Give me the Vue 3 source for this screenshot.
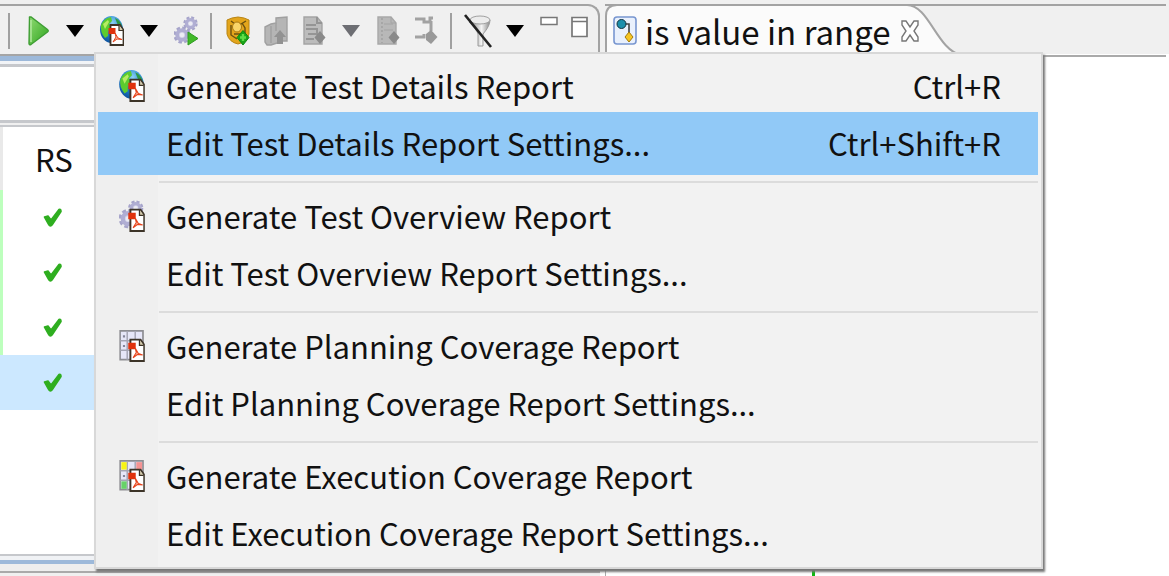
<script setup>
const tools = [
  { id: 'play', label: 'Run' },
  { id: 'caret', label: 'Run options' },
  { id: 'globe', label: 'Generate report' },
  { id: 'caret', label: 'Report options' },
  { id: 'gears', label: 'Execute all' },
  { id: 'sep' },
  { id: 'shield', label: 'Add test' },
  { id: 'import', label: 'Import', off: true },
  { id: 'page', label: 'New page', off: true },
  { id: 'caret', label: 'Page options', off: true },
  { id: 'sheet', label: 'New sheet', off: true },
  { id: 'link', label: 'Link', off: true },
  { id: 'sep' },
  { id: 'filter', label: 'Filter' },
  { id: 'caret', label: 'Filter options' },
  { id: 'min', label: 'Minimize' },
  { id: 'max', label: 'Maximize' },
]
const groups = [
  [
    { text: 'Generate Test Details Report', keys: 'Ctrl+R', icon: 'globe' },
    { text: 'Edit Test Details Report Settings...', keys: 'Ctrl+Shift+R', active: true },
  ],
  [
    { text: 'Generate Test Overview Report', icon: 'overview' },
    { text: 'Edit Test Overview Report Settings...' },
  ],
  [
    { text: 'Generate Planning Coverage Report', icon: 'planning' },
    { text: 'Edit Planning Coverage Report Settings...' },
  ],
  [
    { text: 'Generate Execution Coverage Report', icon: 'execution' },
    { text: 'Edit Execution Coverage Report Settings...' },
  ],
]
const rows = [1, 2, 3, 4]
</script>

<template>
  <svg class="defs" aria-hidden="true">
    <defs>
      <linearGradient id="gPlay" x1="0" y1="0" x2="1" y2="1">
        <stop offset="0" stop-color="#8fda72" /><stop offset="1" stop-color="#2fa51e" />
      </linearGradient>
      <radialGradient id="gSea" cx=".55" cy=".25" r=".8">
        <stop offset="0" stop-color="#8cd0f5" /><stop offset=".5" stop-color="#2384cf" /><stop offset="1" stop-color="#0b4d9a" />
      </radialGradient>
      <linearGradient id="gFun" x1="0" x2="1">
        <stop offset="0" stop-color="#777" /><stop offset=".6" stop-color="#f4f4f4" /><stop offset="1" stop-color="#888" />
      </linearGradient>
      <symbol id="s-pdf" viewBox="0 0 24 30">
        <path d="M10.500 9h9.500l3.500 5v15h-13z" fill="#fff" stroke="#3d3428" stroke-width="1.800" />
        <path d="M19 9v5.500h4" fill="#d8cfae" stroke="#3d3428" stroke-width="1.200" />
        <path d="M8.500 12h7v6h-7z" fill="#e0320c" />
        <path d="M13 26l3-5-1-4 3 5 4 1.500-5-.5z" fill="#f6b49c" stroke="#e5441c" />
      </symbol>
      <symbol id="s-gear" viewBox="0 0 24 24">
        <circle cx="12" cy="12" r="9.500" fill="none" stroke="#a6a4ca" stroke-width="4" stroke-dasharray="4.500 2.960" />
        <circle cx="12" cy="12" r="6.500" fill="#d3d3e8" stroke="#b0aed3" stroke-width="5" />
        <circle cx="12" cy="12" r="3" fill="#ececf4" />
      </symbol>
      <symbol id="i-play" viewBox="0 0 24 30">
        <path d="M3.500 1.500Q3 .5 5 1L21.500 13.500q1.500 1.300 0 2.500L5 28.500q-2 .8-2-1z" fill="url(#gPlay)" stroke="#3f9e34" stroke-width="1.400" />
        <path d="M5 4v22" stroke="#b5eaa2" stroke-width="1.400" />
      </symbol>
      <symbol id="i-caret" viewBox="0 0 24 30"><path d="M3 9h18l-9 12z" fill="currentColor" /></symbol>
      <symbol id="i-globe" viewBox="0 0 24 30">
        <ellipse cx="11.500" cy="13.500" rx="11.500" ry="13.500" fill="url(#gSea)" />
        <path d="M1 9Q4 2 11 1l1 4-3 3 3 4-4 3v5l-3 2q-5-6-4-13z" fill="#5ccb2f" />
        <path d="M3 8l5-4 1 2-4 7z" fill="#b7ec63" />
        <path d="M15 2q5 2 7 8l-3 1-2-4z" fill="#2e9a45" />
        <use href="#s-pdf" width="24" height="30" />
      </symbol>
      <symbol id="i-gears" viewBox="0 0 24 30">
        <use href="#s-gear" x="9" y="0" width="15" height="15" />
        <use href="#s-gear" x="-1" y="10" width="18" height="18" />
        <path d="M14 16l10 6.500L14 29z" fill="#41b928" stroke="#2e9a20" />
      </symbol>
      <symbol id="i-overview" viewBox="0 0 24 30">
        <use href="#s-gear" x="8" y="0" width="15" height="15" />
        <use href="#s-gear" x="-1" y="8" width="19" height="19" />
        <use href="#s-pdf" width="24" height="30" />
      </symbol>
      <symbol id="s-grid" viewBox="0 0 24 30">
        <path d="M.8.800h21.500v27H.8z" fill="#e6e6f8" stroke="#8d8d92" stroke-width="1.600" />
        <path d="M7.500 1v27M15 1v27M1 10h21M1 19h21" stroke="#a5a5b4" stroke-width="1.400" />
        <path d="M3.500 5h2v2h-2zM3.500 14h2v2h-2z" fill="#85859a" />
      </symbol>
      <symbol id="i-planning" viewBox="0 0 24 30">
        <use href="#s-grid" width="24" height="30" />
        <use href="#s-pdf" width="24" height="30" />
      </symbol>
      <symbol id="i-execution" viewBox="0 0 24 30">
        <use href="#s-grid" width="24" height="30" />
        <path d="M2 2h5v7H2z" fill="#f8f414" /><path d="M16 2h5.500v7H16z" fill="#f59393" /><path d="M2 20h5v7H2z" fill="#67d268" />
        <use href="#s-pdf" width="24" height="30" />
      </symbol>
      <symbol id="i-shield" viewBox="0 0 24 30">
        <path d="M1 4l5-2 6-1 6 1 5 2v14q-2 8-11 10Q3 26 1 18z" fill="#e3a51c" stroke="#b98412" />
        <path d="M5 5l4 3h6l5-3M5 9v10l6 4M16 7l3 5v6M8 18h6" fill="none" stroke="#6a5010" stroke-width="1.400" />
        <ellipse cx="11" cy="11" rx="4.500" ry="5" fill="#f9d468" stroke="#a97912" />
        <path d="M17 14.500l6 7-6 7.500-6-7.500z" fill="#19a318" stroke="#0a8b0c" />
        <path d="M17 18v7M14 21.500h6" stroke="#5ede45" stroke-width="2.400" />
      </symbol>
      <symbol id="i-import" viewBox="0 0 24 30">
        <path d="M1 11l6-3 5-1V2l11-1v24h-5l-5 2-6 2H3l-2-3z" fill="#b5b5b5" stroke="#a0a0a0" stroke-width="1.400" />
        <path d="M7 10v17M12 7v8" stroke="#a0a0a0" stroke-width="1.400" /><path d="M16 14l6 7h-3v7h-6v-7h-3z" fill="#929292" />
      </symbol>
      <symbol id="i-page" viewBox="0 0 24 30">
        <path d="M2 1h13l5 6v21H2z" fill="#bcbcbc" stroke="#a4a4a4" stroke-width="1.400" />
        <path d="M4 9h10M4 13h11v5H6M4 23h8M15 1v6h5" fill="none" stroke="#959595" stroke-width="2" />
        <path d="M18 15l5.500 6.500L18 28l-5.500-6.500z" fill="#8a8a8a" />
      </symbol>
      <symbol id="i-sheet" viewBox="0 0 24 30">
        <path d="M2 1h13l5 6v21H2z" fill="#b8b8b8" stroke="#a8a8a8" stroke-width="1.400" />
        <path d="M6 2v25" stroke="#959595" stroke-dasharray="2 2" /><path d="M8 8h9M8 14h9M15 1v6h5" fill="none" stroke="#a4a4a4" />
        <path d="M18 15l5.500 6.500L18 28l-5.500-6.500z" fill="#8a8a8a" />
      </symbol>
      <symbol id="i-link" viewBox="0 0 24 30">
        <path d="M1 3h9v3h6V2h3M1 21h9v-3M17 5v10" fill="none" stroke="#a2a2a2" stroke-width="3" />
        <path d="M17 14l6.500 7-6.500 7-5-4v-6z" fill="#999" />
      </symbol>
      <symbol id="i-filter" viewBox="0 0 28 34">
        <path d="M5 8q8 8 9 12v12h5V20q7-8 7-14z" fill="url(#gFun)" stroke="#9b9b9b" />
        <ellipse cx="16" cy="6" rx="10" ry="4" fill="#ececec" stroke="#a0a0a0" />
        <path d="M1 1l26 32" stroke="#222" stroke-width="2.600" />
      </symbol>
      <symbol id="i-min" viewBox="0 0 24 30"><path d="M4 1.500h16v7H4z" fill="#fff" stroke="#777" stroke-width="1.500" /></symbol>
      <symbol id="i-max" viewBox="0 0 24 30"><path d="M4 1.500h15v19H4zM4 5.500h15" fill="#fff" stroke="#777" stroke-width="1.700" /></symbol>
      <symbol id="i-check" viewBox="0 0 20 20">
        <path d="M1.500 9L5 8l3 4 8-10.500q2-1 2 2L9 17q-2 2-3 0z" fill="#2fae20" stroke="#2fae20" stroke-width="1.600" stroke-linejoin="round" />
      </symbol>
      <symbol id="i-flow" viewBox="0 0 24 30">
        <rect x="1" y="1" width="22" height="27" rx="3" fill="#e9f0fc" stroke="#7896d0" stroke-width="1.600" />
        <path d="M9 8h7v16" fill="none" stroke="#444" stroke-width="1.600" />
        <circle cx="8.500" cy="8" r="4.500" fill="#1d8fac" stroke="#12333f" />
        <path d="M16 16l4 5-4 5-4-5z" fill="#f6c523" stroke="#a27a0c" />
      </symbol>
    </defs>
  </svg>

  <main class="workbench">
    <section class="view">
      <div class="toolbar" role="toolbar" aria-label="Test tools">
        <template v-for="(t, i) in tools" :key="i">
          <span v-if="t.id === 'sep'" class="divider"></span>
          <button v-else type="button" class="tool" :class="[t.id, { off: t.off }]" :aria-label="t.label" :disabled="t.off">
            <svg><use :href="'#i-' + t.id" /></svg>
          </button>
        </template>
      </div>
      <div class="trim"></div>
      <div class="search"></div>
      <table class="results">
        <thead><tr><th>RS</th></tr></thead>
        <tbody>
          <tr v-for="r in rows" :key="r" :class="{ selected: r === 4 }">
            <td><svg class="check" role="img" aria-label="Passed"><use href="#i-check" /></svg></td>
          </tr>
        </tbody>
      </table>
      <div class="blank"></div>
      <div class="next"></div>
    </section>

    <section class="editor">
      <div class="tabs">
        <svg class="curve" viewBox="0 0 360 52" aria-hidden="true">
          <path d="M1 52V12Q1 1 12 1H302C324 1 332 46 356 51" fill="#fbfbfb" stroke="#a3a3a3" stroke-width="2" />
        </svg>
        <div class="tab">
          <svg class="flow"><use href="#i-flow" /></svg>
          <span>is value in range</span>
          <button type="button" class="close" aria-label="Close tab">
            <svg viewBox="0 0 20 22"><path d="M2 1h4l4 6 4-6h4v4l-4 6 4 6v4h-4l-4-6-4 6H2v-4l4-6-4-6z" fill="#fff" stroke="#777" stroke-width="1.400" /></svg>
          </button>
        </div>
      </div>
      <div class="canvas"><i class="mark"></i></div>
    </section>

    <div class="menu" role="menu">
      <div v-for="(g, i) in groups" :key="i" class="group" role="group">
        <button v-for="m in g" :key="m.text" type="button" role="menuitem" class="item" :class="{ active: m.active }">
          <span class="slot"><svg v-if="m.icon"><use :href="'#i-' + m.icon" /></svg></span>
          <span class="name">{{ m.text }}</span>
          <span v-if="m.keys" class="keys">{{ m.keys }}</span>
        </button>
      </div>
    </div>
  </main>
</template>

<style>
body { margin: 0; overflow: hidden; }
</style>

<style scoped>
* { box-sizing: border-box; }
.defs { position: absolute; width: 0; height: 0; }
.workbench {
  position: relative;
  display: flex;
  min-height: 100vh;
  background: #f0f0f0;
  color: #111;
  font-family: "Noto Sans CJK SC", "Noto Sans", sans-serif;
  font-size: 31px;
  line-height: 54px;
}
button { margin: 0; padding: 0; border: 0; background: none; color: inherit; font: inherit; }
.view { flex: 0 0 600px; display: flex; flex-direction: column; padding-top: 4px; }
.toolbar {
  display: flex;
  align-items: center;
  height: 50px;
  padding: 2px 0 0 19px;
  border-top: 2px solid #a3a3a3;
  border-right: 2px solid #a3a3a3;
  border-radius: 0 12px 0 0;
  position: relative;
}
.toolbar::before { content: ""; position: absolute; left: 8px; top: 7px; width: 2px; height: 36px; background: #a0a0a0; }
.tool { width: 38px; height: 30px; display: flex; justify-content: center; }
.tool svg { width: 24px; height: 30px; flex: none; }
.tool.caret { width: 36px; color: #000; }
.tool.caret.off { color: #6d6e73; }
.tool.filter { height: 34px; }
.tool.filter svg { width: 28px; height: 34px; }
.tool.min, .tool.max { width: 31px; }
.divider { width: 14px; height: 36px; border-left: 2px solid #a0a0a0; margin-left: 5px; margin-right: -5px; }
.trim { height: 13px; border-top: 2px solid #a5a5a5; border-bottom: 3px solid #c6c8cc; background: linear-gradient(#9db9da 0 5px, #f2f4f7 5px); }
.search { height: 60px; background: linear-gradient(#fff 53px, #c6c8cc 53px 56px, #f0f0f0 56px 58px, #c6c8cc 58px); }
.results { width: 100%; border-collapse: collapse; background: #fff; }
.results th { height: 63px; padding: 0 0 0 32px; text-align: left; font-weight: 400; border-left: 3px solid #e9e9e9; }
.results td { height: 55px; padding: 0 0 0 40px; line-height: 0; border-left: 3px solid #bdffbd; }
.results .selected td { background: #cce8ff; border-left-color: #cce8ff; }
.check { width: 20px; height: 20px; }
.blank { flex: 1; background: #fff; }
.next { height: 22px; background: linear-gradient(#c6c8cc 0 2px, #f0f2f5 2px 6px, #9db9da 6px 10px, #eee 10px 17px, #aaa 17px 19px, #f0f0f0 19px); }
.editor { flex: 1; display: flex; flex-direction: column; padding: 4px 3px 0 5px; background: linear-gradient(#f0f0f0 54px, #fff 54px); }
.tabs { position: relative; height: 53px; border-top: 2px solid #a3a3a3; border-bottom: 2px solid #aaa; }
.curve { position: absolute; left: 0; top: -2px; width: 360px; height: 52px; }
.tab { position: relative; display: flex; align-items: center; height: 50px; padding-left: 8px; font-size: 33px; line-height: 48px; }
.flow { width: 24px; height: 30px; margin-right: 8px; }
.tab span { white-space: nowrap; }
.close { width: 20px; height: 22px; margin-left: 9px; line-height: 0; }
.close svg { width: 20px; height: 22px; }
.canvas { flex: 1; display: flex; align-items: flex-end; padding-left: 206px; border-left: 1px solid #aaa; }
.mark { width: 3px; height: 6px; background: #12b812; }
.menu {
  position: absolute;
  left: 94px;
  right: 126px;
  top: 52px;
  padding: 4px 3px 5px 2px;
  border: 2px solid #d8d8d8;
  background: linear-gradient(90deg, #efefef 62px, #f2f2f2 62px);
  box-shadow: 2px 3px 2px #777;
}
.group + .group { margin-top: 7px; padding-top: 7px; background: linear-gradient(#dcdcdc, #dcdcdc) 61px 0 / 100% 2px no-repeat; }
.group + .group { border-top: 2px solid transparent; }
.item { position: relative; display: flex; align-items: center; width: 100%; height: 57px; padding: 0 37px 2px 0; text-align: left; white-space: nowrap; }
.item.active::before { content: ""; position: absolute; inset: -3px 0; background: #91c9f7; }
.slot { position: relative; width: 68px; padding-left: 21px; line-height: 0; }
.slot svg { width: 26px; height: 32px; }
.name { position: relative; flex: 1; }
.keys { position: relative; }
</style>
